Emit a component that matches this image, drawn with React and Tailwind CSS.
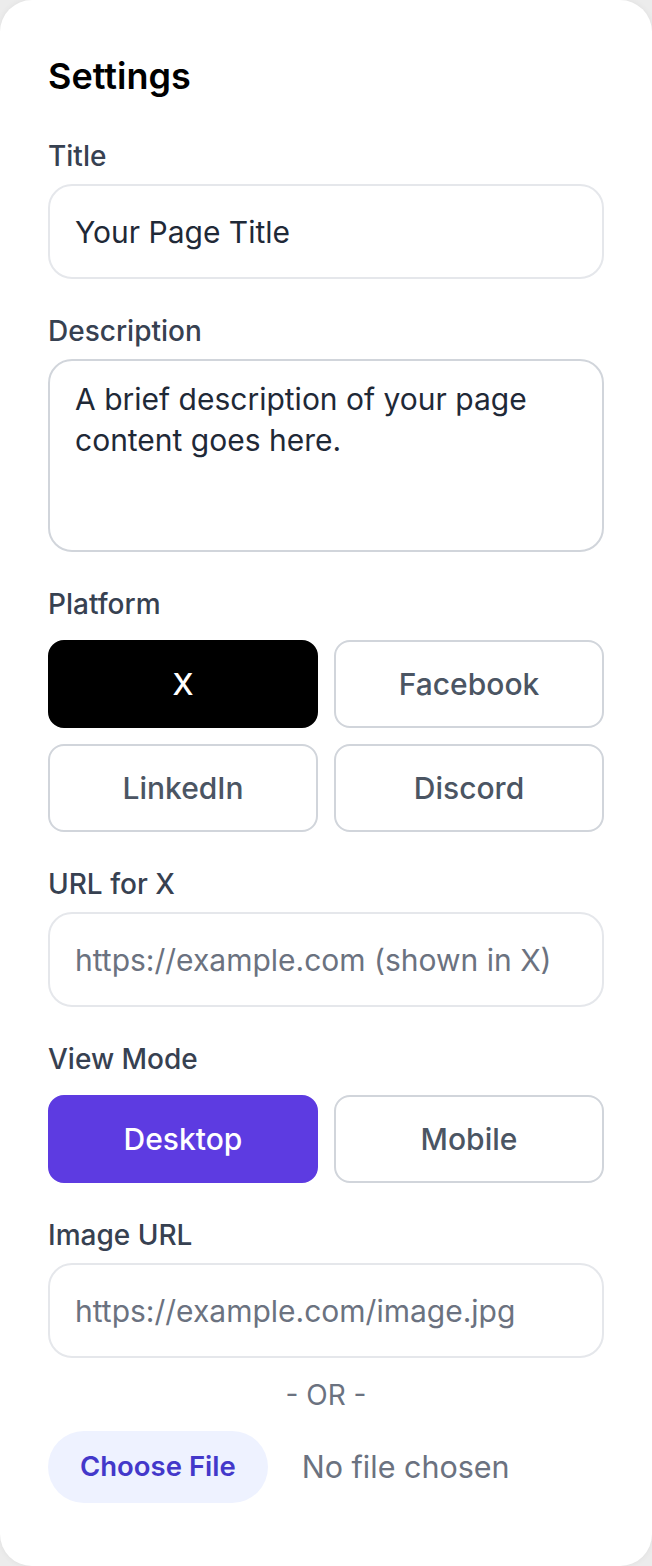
import { useState } from "react";

function Label({ children, className = "mb-2" }) {
  return (
    <label className={`block text-[28px] leading-[40px] font-medium text-[#374151] ${className}`}>
      {children}
    </label>
  );
}

const inputCls =
  "block w-full h-[95px] rounded-[24px] border-2 border-[#e5e7eb] bg-white px-[25px] text-[30px] text-[#1f2937] placeholder:text-[#6b7280] outline-none";

function Toggle({ active, activeCls, children, onClick }) {
  return (
    <button
      onClick={onClick}
      className={`h-[88px] rounded-[16px] text-[30px] font-medium border-2 ${
        active ? activeCls : "bg-white border-[#d1d5db] text-[#4b5563]"
      }`}
    >
      {children}
    </button>
  );
}

export default function App() {
  const [platform, setPlatform] = useState("X");
  const [view, setView] = useState("Desktop");
  const platforms = ["X", "Facebook", "LinkedIn", "Discord"];

  return (
    <div className="h-[1566px] w-full bg-[#ececec] font-['Inter',sans-serif]">
      <div className="h-full rounded-[32px] bg-white px-[48px] pt-[48px] pb-[48px] shadow-[0_0_6px_rgba(0,0,0,0.06)]">
        <h2 className="text-[36px] leading-[56px] font-semibold text-black mb-[32px]">Settings</h2>

        <div className="mb-[32px]">
          <Label>Title</Label>
          <input className={inputCls} defaultValue="Your Page Title" />
        </div>

        <div className="mb-[32px]">
          <Label>Description</Label>
          <textarea
            className="block w-full h-[193px] resize-none rounded-[24px] border-2 border-[#d1d5db] bg-white px-[25px] pt-[18px] text-[30px] leading-[41px] text-[#1f2937] outline-none"
            defaultValue="A brief description of your page content goes here."
          />
        </div>

        <div className="mb-[32px]">
          <Label className="mb-[16px]">Platform</Label>
          <div className="grid grid-cols-2 gap-[16px]">
            {platforms.map((p) => (
              <Toggle
                key={p}
                active={platform === p}
                activeCls="bg-black border-black text-white"
                onClick={() => setPlatform(p)}
              >
                {p}
              </Toggle>
            ))}
          </div>
        </div>

        <div className="mb-[32px]">
          <Label>URL for {platform}</Label>
          <input
            className={`${inputCls} h-[94px] text-[29.5px]`}
            placeholder={`https://example.com (shown in ${platform})`}
          />
        </div>

        <div className="mb-[32px]">
          <Label className="mb-[16px]">View Mode</Label>
          <div className="grid grid-cols-2 gap-[16px]">
            {["Desktop", "Mobile"].map((v) => (
              <Toggle
                key={v}
                active={view === v}
                activeCls="bg-[#5d3be1] border-[#5d3be1] text-white"
                onClick={() => setView(v)}
              >
                {v}
              </Toggle>
            ))}
          </div>
        </div>

        <div>
          <Label>Image URL</Label>
          <input className={inputCls} placeholder="https://example.com/image.jpg" />
          <p className="mt-[17px] mb-[16px] text-center text-[28px] leading-[40px] text-[#6b7280]">- OR -</p>
          <div className="flex items-center gap-[34px]">
            <span className="inline-flex h-[72px] items-center rounded-full bg-[#eef2ff] px-[32px] text-[27.5px] font-semibold text-[#4338ca]">
              Choose File
            </span>
            <span className="text-[30.5px] text-[#6b7280]">No file chosen</span>
          </div>
        </div>
      </div>
    </div>
  );
}
